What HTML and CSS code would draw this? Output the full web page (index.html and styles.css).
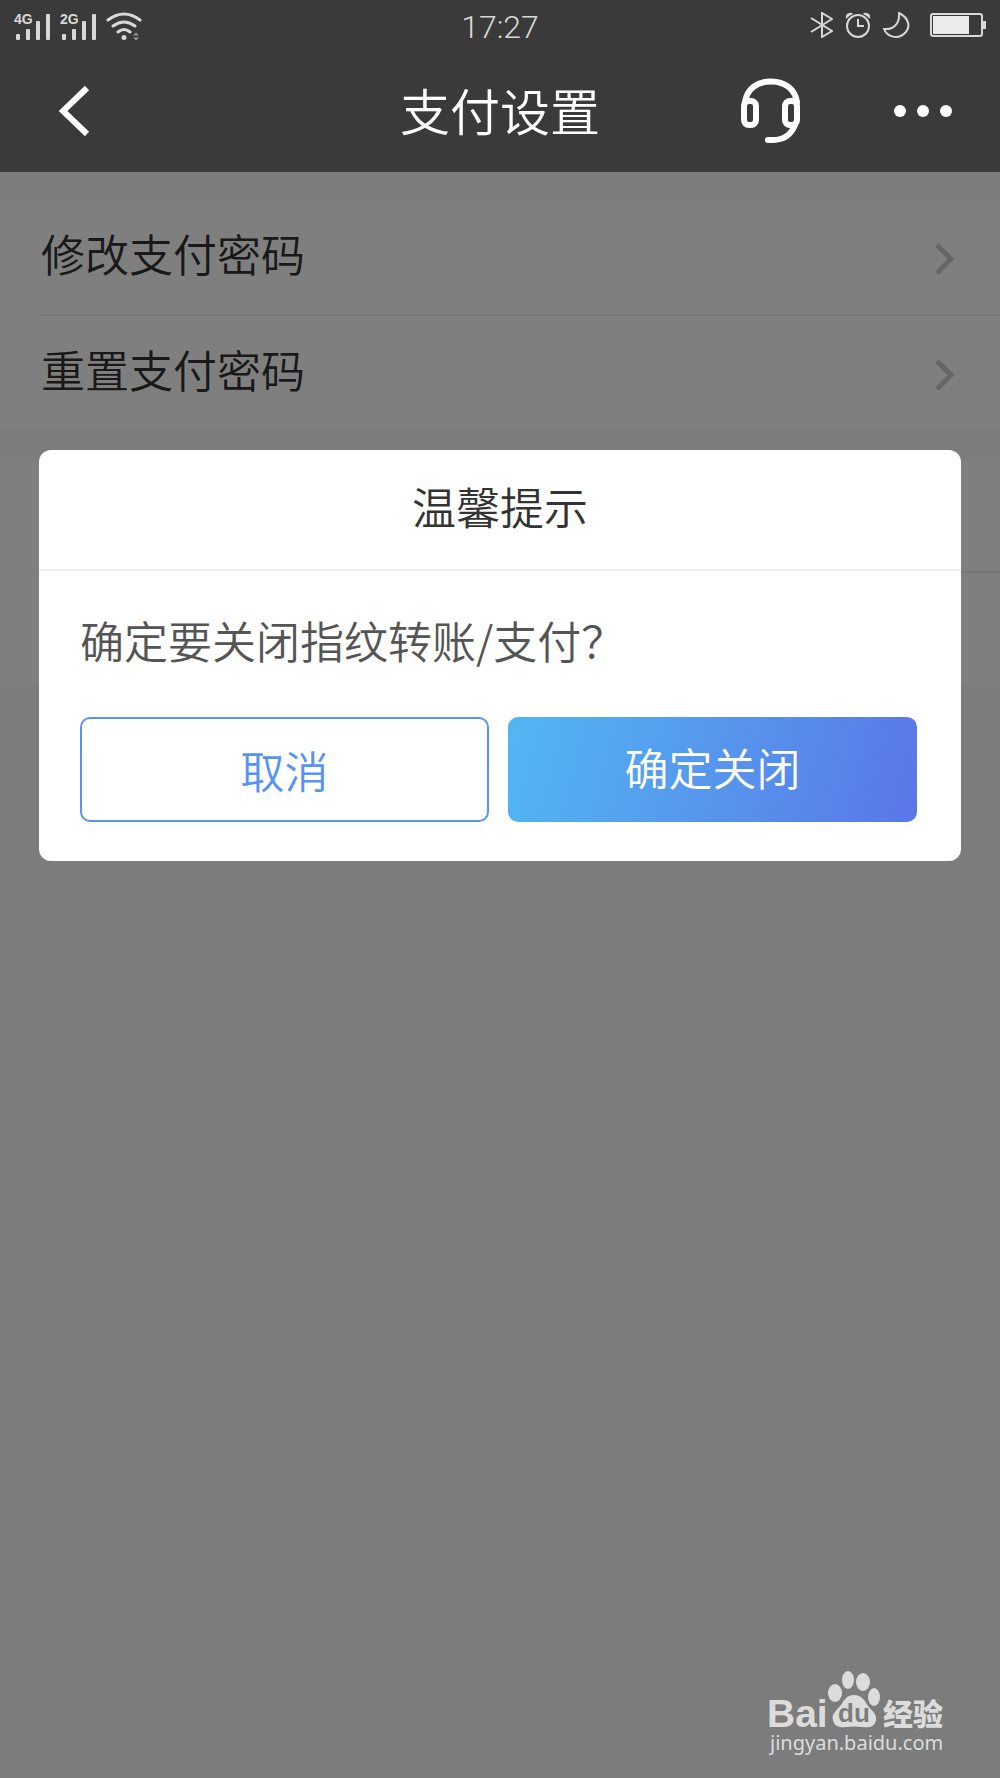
FILE: index.html
```html
<!DOCTYPE html>
<html lang="zh-CN">
<head>
<meta charset="utf-8">
<meta name="viewport" content="width=device-width, initial-scale=1">
<title>支付设置</title>
<link rel="stylesheet" href="styles.css">
</head>
<body>
<header class="topbar">
  <div class="status">
    <div class="status-left">
      <svg class="signal" width="88" height="30" viewBox="0 0 88 30" aria-hidden="true">
        <g class="fill">
          <text class="net" x="0" y="14">4G</text>
          <rect x="2" y="24" width="4" height="6" rx="1"/><rect x="12" y="19" width="4" height="11" rx="1"/><rect x="22" y="11" width="4" height="19" rx="1"/><rect x="32" y="4" width="4" height="26" rx="1"/>
          <text class="net" x="46" y="14">2G</text>
          <rect x="48" y="24" width="4" height="6" rx="1"/><rect x="58" y="19" width="4" height="11" rx="1"/><rect x="68" y="11" width="4" height="19" rx="1"/><rect x="78" y="4" width="4" height="26" rx="1"/>
        </g>
      </svg>
      <svg width="36" height="30" viewBox="0 0 36 30" aria-hidden="true">
        <path class="line arc" d="M2 10Q18 -2 34 10M7 16Q18 8 29 16M12 22Q18 17 24 22"/>
        <circle class="fill" cx="18" cy="27.500" r="2.500"/>
        <path class="dim" d="M27 25.500h6l-3-3zM27 27.500h6l-3 3z"/>
      </svg>
    </div>
    <time class="clock">17:27</time>
    <div class="status-right">
      <svg width="24" height="26" viewBox="0 0 24 26" aria-hidden="true"><path class="line" d="M2 6L23 19L13 25V1L23 7L2 20"/></svg>
      <svg width="26" height="26" viewBox="0 0 26 26" aria-hidden="true"><circle class="line" cx="13" cy="14" r="11"/><path class="line" d="M13 7v7h6"/><path class="fill" d="M1 7Q0 2 4 1Q7 0 8 2Q3 4 1 7zM25 7Q26 2 22 1Q19 0 18 2Q23 4 25 7z"/></svg>
      <svg width="27" height="26" viewBox="0 0 27 26" aria-hidden="true"><path class="line" d="M16 1C26 6 28 15 22 21C15 28 4 25 1 17C10 18 17 12 16 1z"/></svg>
      <svg class="battery" width="56" height="26" viewBox="0 0 56 26" aria-hidden="true"><rect class="line" x="1" y="2" width="51" height="22" rx="2"/><rect class="charge" x="3" y="4" width="36" height="18"/><rect class="fill" x="53" y="9" width="3" height="8"/></svg>
    </div>
  </div>
  <nav class="nav">
    <button class="icon-button back" type="button" aria-label="返回">
      <svg width="32" height="52" viewBox="0 0 32 52"><path d="M28 3L4 26L28 49"/></svg>
    </button>
    <h1 class="title">支付设置</h1>
    <div class="nav-actions">
      <button class="icon-button" type="button" aria-label="客服">
        <svg width="60" height="66" viewBox="0 0 60 66"><path d="M4 24C6 11 16 3.500 30 3.500S54 11 56 24M27 62H32Q48 62 54 47"/><rect x="3" y="23" width="12" height="24" rx="5"/><rect x="44" y="23" width="12" height="24" rx="5"/></svg>
      </button>
      <button class="icon-button" type="button" aria-label="更多">
        <svg class="dots" width="60" height="14" viewBox="0 0 60 14"><circle cx="7" cy="7" r="6"/><circle cx="30" cy="7" r="6"/><circle cx="53" cy="7" r="6"/></svg>
      </button>
    </div>
  </nav>
</header>
<main class="page">
  <ul class="group">
    <li class="row"><a href="#change"><span class="label">修改支付密码</span><svg class="chevron" width="24" height="36" viewBox="0 0 24 36" aria-hidden="true"><path d="M4 4L18 18L4 32"/></svg></a></li>
    <li class="row"><a href="#reset"><span class="label">重置支付密码</span><svg class="chevron" width="24" height="36" viewBox="0 0 24 36" aria-hidden="true"><path d="M4 4L18 18L4 32"/></svg></a></li>
  </ul>
  <ul class="group" aria-hidden="true">
    <li class="row"></li>
    <li class="row"></li>
  </ul>
  <div class="overlay">
    <section class="dialog" role="dialog" aria-modal="true" aria-labelledby="dialog-title">
      <h2 class="dialog-title" id="dialog-title">温馨提示</h2>
      <div class="dialog-body">
        <p class="message">确定要关闭指纹转账/支付？</p>
        <div class="actions">
          <button class="button cancel" type="button">取消</button>
          <button class="button confirm" type="button">确定关闭</button>
        </div>
      </div>
    </section>
    <svg class="brand" width="184" height="92" viewBox="0 0 184 92" role="img" aria-label="Baidu 经验 jingyan.baidu.com">
      <text class="brand-name" x="0" y="57">Bai</text>
      <g class="paw">
        <ellipse cx="68" cy="23" rx="7" ry="9"/><ellipse cx="81" cy="10" rx="6" ry="9"/><ellipse cx="96" cy="12" rx="7" ry="9"/><ellipse cx="107" cy="27" rx="6" ry="9"/>
        <path d="M87 25C95 25 98 31 101 36C105 41 110 44 109 50C108 57 102 58 95 57Q87 56 79 57C72 58 67 56 66 50C64 44 70 40 74 35C77 30 80 25 87 25z"/>
      </g>
      <text class="brand-du" x="71" y="52">du</text>
      <text class="brand-cn" x="116" y="55">经验</text>
      <text class="brand-url" x="3" y="80">jingyan.baidu.com</text>
    </svg>
  </div>
</main>
</body>
</html>
```

FILE: styles.css
```css
* { box-sizing: border-box; }

body {
  margin: 0;
  min-height: 100vh;
  display: flex;
  flex-direction: column;
  background: #f8f8f8;
  color: #333;
  font-family: "Noto Sans CJK SC", "Noto Sans", sans-serif;
  font-weight: 350;
}

svg { display: block; }
button { font: inherit; cursor: pointer; }

.topbar { background: #3a3a3a; color: #fff; }

.status {
  display: grid;
  grid-template-columns: 1fr auto 1fr;
  align-items: center;
  height: 50px;
  padding: 0 14px;
}
.status-left, .status-right { display: flex; align-items: center; padding-bottom: 2px; }
.status-left { gap: 4px; }
.status-right { justify-content: flex-end; gap: 12px; }
.battery { margin-left: 8px; }
.clock {
  color: #d8d8d8;
  font-family: Roboto, sans-serif;
  font-size: 32px;
  font-weight: 300;
  line-height: 50px;
  padding-top: 2px;
}
.fill { fill: #d8d8d8; }
.dim { fill: #999; }
.charge { fill: #ebebeb; }
.line { fill: none; stroke: #d8d8d8; stroke-width: 2; }
.arc { stroke-width: 3; stroke-linecap: round; }
.net { font: bold 14px "Liberation Sans", sans-serif; }

.nav {
  display: grid;
  grid-template-columns: 1fr auto 1fr;
  align-items: center;
  height: 122px;
  padding: 0 47px;
}
.title { margin: 0; padding-bottom: 4px; font-size: 50px; font-weight: inherit; line-height: 72px; }
.nav-actions { display: flex; justify-content: flex-end; align-items: center; gap: 92px; }
.icon-button { padding: 0; border: 0; background: none; justify-self: start; }
.icon-button svg { fill: none; stroke: #fff; stroke-width: 6; stroke-linecap: round; }
.back { margin-left: 12px; }
.back svg { stroke-linecap: butt; }
.icon-button .dots { fill: #fff; stroke: none; }

.page { position: relative; flex: 1; }
.group { list-style: none; margin: 28px 0 0; padding: 0 0 0 39px; background: #fff; }
.row { height: 114px; }
.row + .row { height: 115px; border-top: 2px solid #ececec; }
.row a {
  display: flex;
  justify-content: space-between;
  align-items: center;
  height: 100%;
  padding: 4px 43px 0 2px;
  color: inherit;
  font-size: 44px;
  line-height: 64px;
  text-decoration: none;
}
.label { padding-bottom: 12px; }
.chevron { fill: none; stroke: #ccc; stroke-width: 5; }

.overlay {
  position: absolute;
  inset: 0;
  display: flex;
  flex-direction: column;
  justify-content: space-between;
  padding: 278px 39px 16px;
  background: rgba(0, 0, 0, .5);
}
.dialog { border-radius: 12px; background: #fff; }
.dialog-title {
  margin: 0;
  padding: 24px 0 31px;
  border-bottom: 2px solid #f0f0f0;
  font-size: 44px;
  font-weight: inherit;
  line-height: 64px;
  text-align: center;
}
.dialog-body { padding: 37px 44px 39px 41px; }
.message { margin: 0 0 45px; color: #555; font-size: 44px; line-height: 64px; }
.actions { display: grid; grid-template-columns: 1fr 1fr; gap: 19px; }
.button { height: 105px; padding: 0; border: 0; border-radius: 10px; font-size: 44px; line-height: 64px; }
.cancel { border: 2px solid #5794f1; background: #fff; color: #5794f1; }
.confirm { padding-bottom: 6px; background: linear-gradient(105deg, #52b7f3, #5a76e7); color: #fff; }

.brand { align-self: flex-end; margin-right: 10px; fill: #dcdcdc; }
.brand-name { font: bold 39px "Liberation Sans", sans-serif; }
.brand-du { fill: #7c7c7c; font: bold 26px "Liberation Sans", sans-serif; }
.brand-cn { font: 900 30px "Noto Sans CJK SC", sans-serif; }
.brand-url { font: 20px "Noto Sans", sans-serif; }
```
